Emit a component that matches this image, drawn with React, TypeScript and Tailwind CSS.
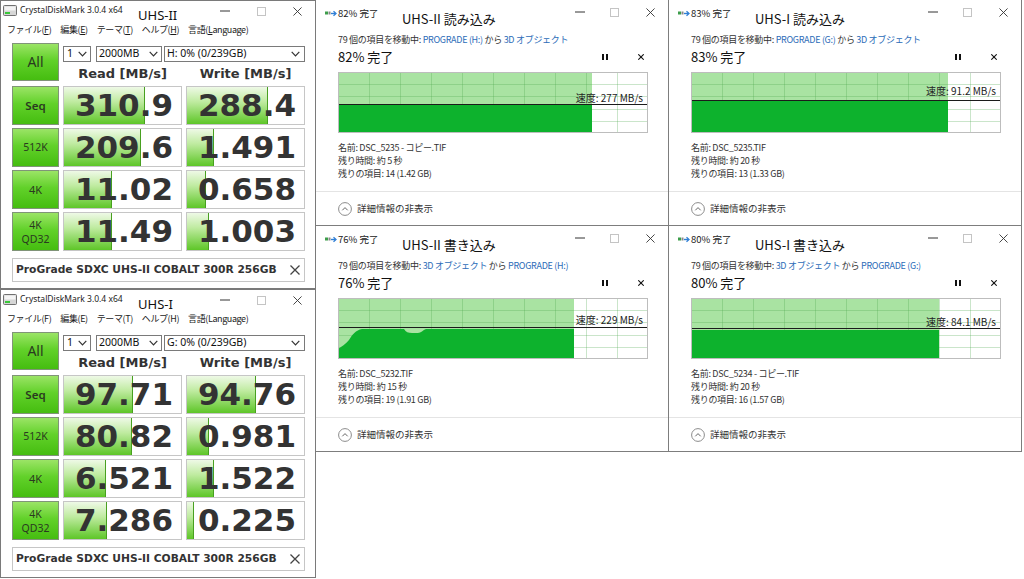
import React from "react";

const JP = "font-['Noto_Sans_CJK_JP','Noto_Sans',sans-serif] font-features-['palt']";
const NUM = "font-['DejaVu_Sans','Verdana',sans-serif] font-bold";
const UI = "font-['Noto_Sans','Noto_Sans_CJK_JP',sans-serif]";

type Cell = { v: string; p: number };
type Bench = {
  title: string;
  drive: string;
  underline: boolean;
  rows: [string, Cell, Cell][];
};

const benches: Bench[] = [
  {
    title: "UHS-II",
    drive: "H: 0% (0/239GB)",
    underline: true,
    rows: [
      ["Seq", { v: "310.9", p: 69 }, { v: "288.4", p: 69 }],
      ["512K", { v: "209.6", p: 66 }, { v: "1.491", p: 23 }],
      ["4K", { v: "11.02", p: 41 }, { v: "0.658", p: 16 }],
      ["QD32", { v: "11.49", p: 41 }, { v: "1.003", p: 19 }],
    ],
  },
  {
    title: "UHS-I",
    drive: "G: 0% (0/239GB)",
    underline: false,
    rows: [
      ["Seq", { v: "97.71", p: 59 }, { v: "94.76", p: 59 }],
      ["512K", { v: "80.82", p: 58 }, { v: "0.981", p: 19 }],
      ["4K", { v: "6.521", p: 36 }, { v: "1.522", p: 23 }],
      ["QD32", { v: "7.286", p: 37 }, { v: "0.225", p: 6 }],
    ],
  },
];

type Copy = {
  small: string;
  title: string;
  from: string;
  to: string;
  progress: number;
  speed: string;
  line: number;
  fillTop: number;
  labelTop: number;
  curve?: boolean;
  name: string;
  time: string;
  left: string;
};

const copies: Copy[] = [
  {
    small: "82% 完了",
    title: "UHS-II 読み込み",
    from: "PROGRADE (H:)",
    to: "3D オブジェクト",
    progress: 82,
    speed: "277 MB/s",
    line: 32,
    fillTop: 32,
    labelTop: 20,
    name: "DSC_5235 - コピー.TIF",
    time: "約 5 秒",
    left: "14 (1.42 GB)",
  },
  {
    small: "83% 完了",
    title: "UHS-I 読み込み",
    from: "PROGRADE (G:)",
    to: "3D オブジェクト",
    progress: 83,
    speed: "91.2 MB/s",
    line: 28,
    fillTop: 29,
    labelTop: 13,
    name: "DSC_5235.TIF",
    time: "約 20 秒",
    left: "13 (1.33 GB)",
  },
  {
    small: "76% 完了",
    title: "UHS-II 書き込み",
    from: "3D オブジェクト",
    to: "PROGRADE (H:)",
    progress: 76,
    speed: "229 MB/s",
    line: 29,
    fillTop: 31,
    labelTop: 16,
    curve: true,
    name: "DSC_5232.TIF",
    time: "約 15 秒",
    left: "19 (1.91 GB)",
  },
  {
    small: "80% 完了",
    title: "UHS-I 書き込み",
    from: "3D オブジェクト",
    to: "PROGRADE (G:)",
    progress: 80,
    speed: "84.1 MB/s",
    line: 30,
    fillTop: 32,
    labelTop: 18,
    name: "DSC_5234 - コピー.TIF",
    time: "約 20 秒",
    left: "16 (1.57 GB)",
  },
];

function DriveIcon() {
  return (
    <svg width="14" height="11" viewBox="0 0 14 11">
      <rect x="0.5" y="0.5" width="13" height="10" rx="1" fill="#d6d6d6" stroke="#707070" />
      <rect x="1.5" y="1.5" width="11" height="4" fill="#f4f4f4" />
      <rect x="2" y="7" width="5" height="2" fill="#38c838" />
    </svg>
  );
}

function CopyIcon() {
  return (
    <svg width="12" height="7" viewBox="0 0 12 7">
      <rect x="0" y="1.5" width="3" height="3" fill="#3d9d4a" />
      <rect x="3.5" y="1.5" width="2" height="3" fill="#8a8a8a" />
      <path d="M6 3.5 H10.5" stroke="#2f7fd6" strokeWidth="1.4" />
      <path d="M8.5 1.2 L11 3.5 L8.5 5.8" stroke="#2f7fd6" strokeWidth="1.3" fill="none" />
    </svg>
  );
}

function MinGlyph() {
  return (
    <svg width="10" height="2" viewBox="0 0 10 2">
      <path d="M0 1 H10" stroke="#333" strokeWidth="1" />
    </svg>
  );
}

function MaxGlyph() {
  return (
    <svg width="9" height="9" viewBox="0 0 9 9">
      <rect x="0.5" y="0.5" width="8" height="8" fill="none" stroke="#c4c4c4" />
    </svg>
  );
}

function CloseGlyph({ size = 9, color = "#333", w = 1 }: { size?: number; color?: string; w?: number }) {
  return (
    <svg width={size} height={size} viewBox="0 0 10 10">
      <path d="M0.5 0.5 L9.5 9.5 M9.5 0.5 L0.5 9.5" stroke={color} strokeWidth={w} />
    </svg>
  );
}

function Chevron() {
  return (
    <svg width="9" height="6" viewBox="0 0 9 6">
      <path d="M0.7 0.8 L4.5 4.8 L8.3 0.8" stroke="#333" strokeWidth="1.2" fill="none" />
    </svg>
  );
}

function Menu({ underline }: { underline: boolean }) {
  const items: [string, string, string][] = [
    ["ファイル(", "F", ")"],
    ["編集(", "E", ")"],
    ["テーマ(", "T", ")"],
    ["ヘルプ(", "H", ")"],
    ["言語(", "L", "anguage)"],
  ];
  return (
    <div className={`${JP} h-[17px] flex items-center gap-[9px] pl-[6px] text-[9px] tracking-[-0.4px] text-[#1b1b1b]`}>
      {items.map(([a, k, b]) => (
        <span key={a}>
          {a}
          <span className={underline ? "underline underline-offset-1" : ""}>{k}</span>
          {b}
        </span>
      ))}
    </div>
  );
}

function ModeButton({ label }: { label: string }) {
  return (
    <div className="w-[47px] h-full shrink-0 border border-[#809478] bg-[linear-gradient(to_bottom,#9be466_0%,#62d12a_45%,#45bd10_100%)] flex flex-col items-center justify-center text-[#2a3a20]">
      {label === "Seq" && <span className={`${UI} text-[11.5px] font-semibold leading-none`}>Seq</span>}
      {label === "512K" && <span className={`${UI} text-[10.5px] leading-none`}>512K</span>}
      {label === "4K" && <span className={`${UI} text-[11px] leading-none`}>4K</span>}
      {label === "QD32" && (
        <>
          <span className={`${UI} text-[10.5px] leading-[14px]`}>4K</span>
          <span className={`${UI} text-[10.5px] leading-[14px]`}>QD32</span>
        </>
      )}
    </div>
  );
}

function ResultCell({ c }: { c: Cell }) {
  return (
    <div className="relative w-[119px] h-full border border-[#c6c6c6] bg-white overflow-hidden">
      <div
        className="absolute left-0 top-0 bottom-0 border-r border-[#48a020] bg-[linear-gradient(to_bottom,#eef9e6_0%,#bfeba0_40%,#5ec628_100%)]"
        style={{ width: `${c.p}%` }}
      />
      <div className={`${NUM} relative h-full flex items-center justify-end pr-[8px] text-[31px] leading-none text-[#333]`}>
        {c.v}
      </div>
    </div>
  );
}

function DiskMark({ b }: { b: Bench }) {
  return (
    <div className="w-[316px] h-[289px] border border-[#7a7a7a] bg-white flex flex-col">
      <div className="h-[20px] flex items-start">
        <div className="ml-[2px] mt-[4px]">
          <DriveIcon />
        </div>
        <div className={`${UI} ml-[3px] w-[118px] text-[8.5px] leading-[18px] text-[#1b1b1b] whitespace-nowrap`}>
          CrystalDiskMark 3.0.4 x64
        </div>
        <div className={`${UI} mt-[6px] text-[13px] leading-[16px] text-[#111]`}>{b.title}</div>
        <div className="ml-auto flex">
          <div className="w-[36px] h-[20px] flex items-center justify-center">
            <MinGlyph />
          </div>
          <div className="w-[36px] h-[20px] flex items-center justify-center">
            <MaxGlyph />
          </div>
          <div className="w-[36px] h-[20px] flex items-center justify-center">
            <CloseGlyph />
          </div>
        </div>
      </div>
      <Menu underline={b.underline} />

      <div className="pl-[11px] pt-[5px]">
        <div className="flex gap-[4px] h-[43px]">
          <div className="w-[47px] h-[38px] border border-[#809478] bg-[linear-gradient(to_bottom,#9be466_0%,#62d12a_45%,#45bd10_100%)] flex items-center justify-center">
            <span className={`${UI} text-[14px] leading-none text-[#2a3a20]`}>All</span>
          </div>
          <div className="w-[242px] pt-[3px] flex flex-col">
            <div className={`${UI} h-[16px] flex text-[10.5px] text-[#111]`}>
              <div className="w-[28px] border border-[#7a7a7a] bg-white flex items-center pl-[3px] pr-[3px]">
                <span>1</span>
                <span className="ml-auto"><Chevron /></span>
              </div>
              <div className="ml-[5px] w-[66px] border border-[#7a7a7a] bg-white flex items-center pl-[2px] pr-[3px]">
                <span>2000MB</span>
                <span className="ml-auto"><Chevron /></span>
              </div>
              <div className="ml-[2px] w-[141px] border border-[#7a7a7a] bg-white flex items-center pl-[2px] pr-[4px]">
                <span>{b.drive}</span>
                <span className="ml-auto"><Chevron /></span>
              </div>
            </div>
            <div className={`${NUM} h-[24px] flex gap-[4px] text-[13px] text-[#333]`}>
              <div className="w-[119px] flex items-center justify-center">Read [MB/s]</div>
              <div className="w-[119px] flex items-center justify-center">Write [MB/s]</div>
            </div>
          </div>
        </div>

        <div className="flex flex-col gap-[3px]">
          {b.rows.map(([label, r, w]) => (
            <div key={label} className="flex gap-[4px] h-[39px]">
              <ModeButton label={label} />
              <ResultCell c={r} />
              <ResultCell c={w} />
            </div>
          ))}
        </div>

        <div className="mt-[7px] w-[293px] h-[24px] border border-[#c6c6c6] bg-white flex items-center pl-[3px] pr-[4px]">
          <span className={`${NUM} text-[10.7px] text-[#333] whitespace-nowrap`}>
            ProGrade SDXC UHS-II COBALT 300R 256GB
          </span>
          <span className="ml-auto">
            <CloseGlyph size={10} color="#444" w={1.3} />
          </span>
        </div>
      </div>
    </div>
  );
}

function Chart({ d }: { d: Copy }) {
  const W = 310;
  const H = 61;
  const P = Math.round((W * d.progress) / 100);
  const cols = [31, 62, 93, 124, 155, 186, 217, 248, 279];
  const rows = [12, 24, 37, 49];
  const dark = d.curve
    ? `M0 ${H} L0 51 C3 49 8 46 11 42 C14 37 18 32 24 ${d.fillTop} L66 ${d.fillTop} C68 34 70 35 74 35 L80 35 C83 35 85 32 88 ${d.fillTop} L${P} ${d.fillTop} L${P} ${H} Z`
    : `M0 ${d.fillTop} L${P} ${d.fillTop} L${P} ${H} L0 ${H} Z`;
  return (
    <div className="relative mt-[6px] ml-[22px] w-[310px] h-[61px]">
      <svg width={W} height={H} viewBox={`0 0 ${W} ${H}`} className="block">
        <rect x="0" y="0" width={W} height={H} fill="#fff" />
        <rect x="0" y="0" width={P} height={H} fill="#a9e3a2" />
        {cols.map((x) => (
          <line key={x} x1={x + 0.5} x2={x + 0.5} y1="0" y2={H} stroke="#4fa84f" strokeOpacity="0.3" />
        ))}
        {rows.map((y) => (
          <line key={y} x1="0" x2={W} y1={y + 0.5} y2={y + 0.5} stroke="#4fa84f" strokeOpacity="0.3" />
        ))}
        <path d={dark} fill="#0db22d" />
        <line x1="0" x2={W} y1={d.line + 0.5} y2={d.line + 0.5} stroke="#1b1b1b" strokeWidth="1" />
        <rect x="0.5" y="0.5" width={W - 1} height={H - 1} fill="none" stroke="#bdbdbd" />
      </svg>
      <div className="absolute right-[5px] text-[10px] leading-[12px] text-[#222] whitespace-nowrap" style={{ top: d.labelTop }}>
        速度: {d.speed}
      </div>
    </div>
  );
}

function CopyDialog({ d }: { d: Copy }) {
  return (
    <div className={`${JP} w-[353px] h-[226px] border-r border-b border-[#7d7d7d] bg-white flex flex-col text-[#222]`}>
      <div className="h-[32px] flex items-start">
        <div className="ml-[9px] mt-[10px]">
          <CopyIcon />
        </div>
        <div className="ml-[1px] w-[64px] mt-[7px] text-[9.5px] leading-[12px] whitespace-nowrap">{d.small}</div>
        <div className="mt-[10px] text-[13px] leading-[18px] text-[#111] whitespace-nowrap">{d.title}</div>
        <div className="ml-auto flex">
          <div className="w-[32px] h-[24px] flex items-center justify-center">
            <MinGlyph />
          </div>
          <div className="w-[36px] h-[24px] flex items-center justify-center">
            <MaxGlyph />
          </div>
          <div className="w-[36px] h-[24px] flex items-center justify-center">
            <CloseGlyph />
          </div>
        </div>
      </div>

      <div className="h-[16px] pl-[22px] text-[9px] tracking-[-0.3px] leading-[16px] text-[#333] whitespace-nowrap">
        79 個の項目を移動中: <span className="text-[#2c6cb8]">{d.from}</span> から{" "}
        <span className="text-[#2c6cb8]">{d.to}</span>
      </div>

      <div className="h-[18px] flex items-center pl-[22px] pr-[23px]">
        <span className="text-[13px] leading-[18px] text-[#111]">{d.progress}% 完了</span>
        <div className="ml-auto flex items-center gap-[28px]">
          <div className="w-[8px] flex justify-center gap-[2px]">
            <div className="w-[2px] h-[6px] bg-[#111]" />
            <div className="w-[2px] h-[6px] bg-[#111]" />
          </div>
          <div className="w-[8px] flex justify-center">
            <CloseGlyph size={6} color="#111" w={1.8} />
          </div>
        </div>
      </div>

      <Chart d={d} />

      <div className="mt-[8px] pl-[22px] text-[9px] tracking-[-0.3px] leading-[13px] text-[#333]">
        <div>名前: {d.name}</div>
        <div>残り時間: {d.time}</div>
        <div>残りの項目: {d.left}</div>
      </div>

      <div className="mt-[11px] border-t border-[#e4e4e4] flex-1 flex items-center pl-[22px]">
        <svg width="14" height="14" viewBox="0 0 14 14">
          <circle cx="7" cy="7" r="6.4" fill="none" stroke="#8c8c8c" strokeWidth="1" />
          <path d="M4.3 8.3 L7 5.6 L9.7 8.3" fill="none" stroke="#666" strokeWidth="1" />
        </svg>
        <span className="ml-[5px] text-[9.5px] leading-none text-[#333]">詳細情報の非表示</span>
      </div>
    </div>
  );
}

export default function App() {
  return (
    <div className="w-[1024px] h-[579px] bg-white flex overflow-hidden">
      <div className="flex flex-col">
        {benches.map((b) => (
          <DiskMark key={b.title} b={b} />
        ))}
      </div>
      <div className="flex flex-col">
        <div className="flex">
          <CopyDialog d={copies[0]} />
          <CopyDialog d={copies[1]} />
        </div>
        <div className="flex">
          <CopyDialog d={copies[2]} />
          <CopyDialog d={copies[3]} />
        </div>
      </div>
    </div>
  );
}
